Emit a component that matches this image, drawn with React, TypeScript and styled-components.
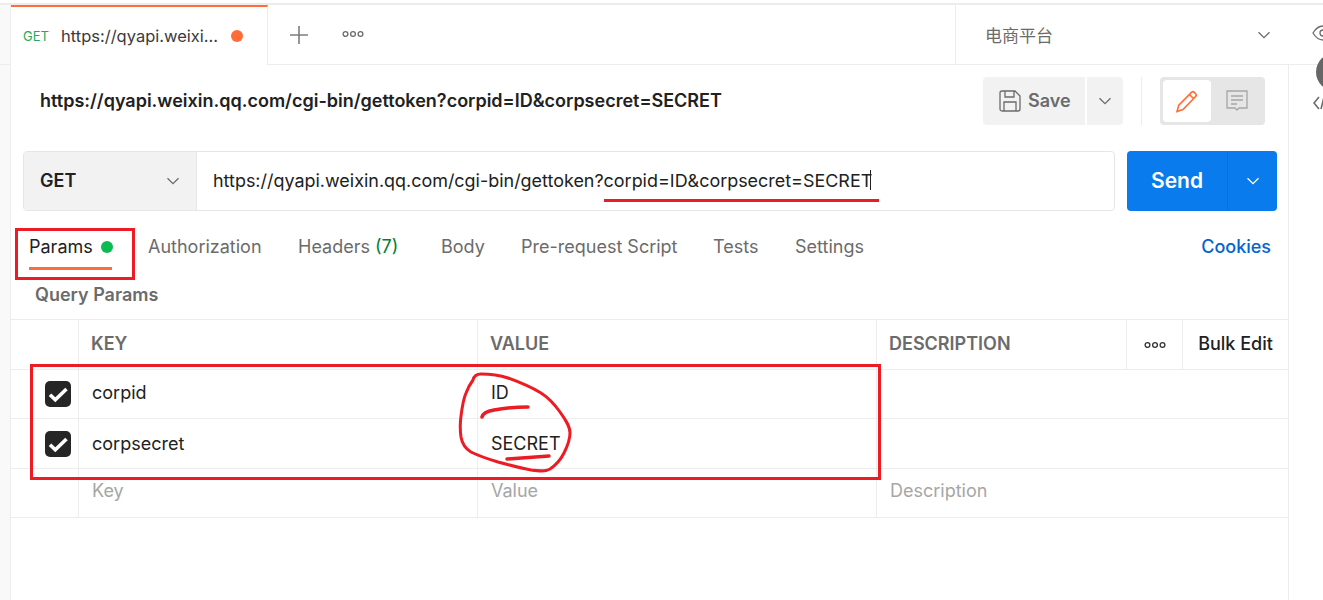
import React from "react";
import styled, { createGlobalStyle } from "styled-components";

const GlobalStyle = createGlobalStyle`
  html, body { margin: 0; padding: 0; background: #fff; }
  body { font-family: Inter, "Noto Sans CJK SC", sans-serif; color: #212121; overflow: hidden; }
  #root { width: 1323px; height: 600px; }
`;

const Chevron = ({ size = 16, color = "#6b6b6b" }: { size?: number; color?: string }) => (
  <svg width={size} height={size} viewBox="0 0 16 16" fill="none">
    <path d="M2.5 5.2 8 10.7l5.5-5.5" stroke={color} strokeWidth="1.3" />
  </svg>
);

const Dots = ({ color = "#6b6b6b" }: { color?: string }) => (
  <svg width="22" height="8" viewBox="0 0 22 8" fill="none" stroke={color} strokeWidth="1.3">
    <circle cx="3.5" cy="4" r="2.4" />
    <circle cx="11" cy="4" r="2.4" />
    <circle cx="18.5" cy="4" r="2.4" />
  </svg>
);

const Check = () => (
  <svg width="26" height="26" viewBox="0 0 26 26">
    <rect width="26" height="26" rx="5" fill="#262626" />
    <path d="M5 13.7l5.3 5L21.5 8" fill="none" stroke="#fff" strokeWidth="3.6" />
  </svg>
);

export default function App() {
  return (
    <Page>
      <GlobalStyle />
      <Gutter>
        <GutterHead />
      </Gutter>
      <Main>
        <TabBar>
          <ActiveTab>
            <TabMethod>GET</TabMethod>
            <TabTitle>https://qyapi.weixi...</TabTitle>
            <UnsavedDot />
          </ActiveTab>
          <TabAction>
            <svg width="20" height="20" viewBox="0 0 20 20" stroke="#7d7d7d" strokeWidth="1.6">
              <path d="M10 1v18M1 10h18" />
            </svg>
          </TabAction>
          <TabAction>
            <Dots />
          </TabAction>
          <EnvSelect>
            <EnvName>电商平台</EnvName>
            <Chevron />
          </EnvSelect>
        </TabBar>

        <Content>
          <TitleRow>
            <RequestName>https://qyapi.weixin.qq.com/cgi-bin/gettoken?corpid=ID&amp;corpsecret=SECRET</RequestName>
            <SaveButton>
              <svg width="22" height="22" viewBox="0 0 22 22" fill="none" stroke="#6b6b6b" strokeWidth="1.3">
                <path d="M1 3a2 2 0 0 1 2-2h13l5 5v13a2 2 0 0 1-2 2H3a2 2 0 0 1-2-2z" />
                <path d="M6 1v6h9V1M5 21v-9h12v9" />
              </svg>
              <SaveLabel>Save</SaveLabel>
            </SaveButton>
            <SaveCaret>
              <Chevron />
            </SaveCaret>
            <Divider />
            <ModeToggle>
              <ModeButton $active>
                <svg width="24" height="24" viewBox="0 0 24 24" fill="none" stroke="#ff6c37" strokeWidth="1.6">
                  <path d="M2 22.5l1.8-6.3L16.5 3.4a2 2 0 0 1 2.8 0l1.3 1.3a2 2 0 0 1 0 2.8L8 20.5zM14.5 5.5l4 4" />
                </svg>
              </ModeButton>
              <ModeButton>
                <svg width="22" height="22" viewBox="0 0 22 22" fill="none" stroke="#a6a6a6" strokeWidth="1.3">
                  <path d="M1 1h20v17h-8l-2 2-2-2H1z" />
                  <path d="M5 6h12M5 10h12M5 14h6" />
                </svg>
              </ModeButton>
            </ModeToggle>
          </TitleRow>

          <UrlRow>
            <UrlGroup>
              <MethodSelect>
                <MethodLabel>GET</MethodLabel>
                <Chevron />
              </MethodSelect>
              <UrlInput>
                https://qyapi.weixin.qq.com/cgi-bin/gettoken?corpid=ID&amp;corpsecret=SECRET
                <Caret />
              </UrlInput>
            </UrlGroup>
            <SendGroup>
              <SendLabel>Send</SendLabel>
              <SendCaret>
                <Chevron color="#fff" />
              </SendCaret>
            </SendGroup>
          </UrlRow>

          <RequestTabs>
            <RequestTab $active $width={119}>
              Params
              <GreenDot />
            </RequestTab>
            <RequestTab $width={150}>Authorization</RequestTab>
            <RequestTab $width={143}>
              Headers&nbsp;<Count>(7)</Count>
            </RequestTab>
            <RequestTab $width={80}>Body</RequestTab>
            <RequestTab $width={192}>Pre-request Script</RequestTab>
            <RequestTab $width={82}>Tests</RequestTab>
            <RequestTab>Settings</RequestTab>
            <Cookies>Cookies</Cookies>
          </RequestTabs>

          <SectionTitle>Query Params</SectionTitle>

          <Table>
            <HeaderRow>
              <Cell />
              <HeadCell $lift={2}>KEY</HeadCell>
              <HeadCell $lift={2}>VALUE</HeadCell>
              <HeadCell $lift={2}>DESCRIPTION</HeadCell>
              <ToolCell>
                <Dots color="#333" />
              </ToolCell>
              <ToolCell $lift={2}>Bulk Edit</ToolCell>
            </HeaderRow>
            <BodyRow>
              <CheckCell>
                <Check />
              </CheckCell>
              <Cell $lift={4}>corpid</Cell>
              <Cell $lift={4}>ID</Cell>
              <Cell $span />
            </BodyRow>
            <BodyRow>
              <CheckCell>
                <Check />
              </CheckCell>
              <Cell>corpsecret</Cell>
              <Cell>SECRET</Cell>
              <Cell $span />
            </BodyRow>
            <BodyRow>
              <Cell />
              <Cell $muted $lift={5}>
                Key
              </Cell>
              <Cell $muted $lift={5}>
                Value
              </Cell>
              <Cell $muted $span $lift={5}>
                Description
              </Cell>
            </BodyRow>
          </Table>
        </Content>
      </Main>

      <Rail>
        <RailEye>
          <svg width="22" height="18" viewBox="0 0 22 18" fill="none" stroke="#6b6b6b" strokeWidth="1.3">
            <path d="M1 9c3-5 6-7 10-7s7 2 10 7c-3 5-6 7-10 7S4 14 1 9z" />
            <circle cx="11" cy="9" r="3" />
          </svg>
        </RailEye>
        <Avatar />
        <RailCode>
          <svg width="20" height="14" viewBox="0 0 20 14" fill="none" stroke="#6b6b6b" strokeWidth="1.6">
            <path d="M6 1 1 7l5 6M11 1 8 13" />
          </svg>
        </RailCode>
      </Rail>

      <Annotations width="1323" height="600" viewBox="0 0 1323 600" fill="none" stroke="#ed1c24">
        <rect x="16.5" y="229.5" width="117" height="49" strokeWidth="3" />
        <rect x="31.5" y="365.5" width="848" height="113" strokeWidth="3" />
        <path d="M604 200.5h275" strokeWidth="3" />
        <path
          d="M473 380c1-4 4-6 8-6 9 0 18 1 27 4 11 4 23 9 33 15 8 5 14 12 19 19 5 7 10 14 10 21 0 8-3 14-6 20-3 6-8 12-14 16-5 3-12 2-19 1-11-2-22-5-33-8-10-3-19-6-27-10-5-3-9-9-10-15-1-7-1-14 0-21 1-8 2-16 5-23 2-5 4-9 7-13z"
          strokeWidth="3"
          strokeLinejoin="round"
        />
        <path d="M482 417c1-4 6-6 12-7 11-2 23-3 34-3" strokeWidth="3.5" strokeLinecap="round" />
        <path d="M507 459c14-1 28-2 42-3" strokeWidth="3.5" strokeLinecap="round" />
      </Annotations>
    </Page>
  );
}

const Page = styled.div`
  position: relative;
  display: flex;
  width: 1323px;
  height: 600px;
  overflow: hidden;
  background: #fff;
`;

const Gutter = styled.div`
  flex: 0 0 11px;
  box-sizing: border-box;
  margin-top: 5px;
  background: #f9f9f9;
  border-right: 1px solid #ededed;
  box-shadow: 0 -2px 0 #ececec;
`;

const GutterHead = styled.div`
  height: 59px;
  border-bottom: 1px solid #ededed;
`;

const Main = styled.div`
  flex: 0 0 1277px;
  min-width: 0;
  display: flex;
  flex-direction: column;
`;

const TabBar = styled.div`
  display: flex;
  align-items: stretch;
  flex: none;
  width: 1312px;
  height: 59px;
  margin-top: 5px;
  border-bottom: 1px solid #ededed;
  box-shadow: 0 -2px 0 #ececec;
`;

const ActiveTab = styled.div`
  display: flex;
  align-items: center;
  box-sizing: border-box;
  width: 257px;
  height: 60px;
  padding: 0 12px;
  background: #fff;
  border-top: 2px solid #ff6c37;
  border-right: 1px solid #ededed;
  position: relative;
  z-index: 1;
`;

const TabMethod = styled.span`
  font-size: 13px;
  color: #26a95c;
  width: 38px;
`;

const TabTitle = styled.span`
  font-size: 16.5px;
  color: #3a3a3a;
  flex: 1;
  white-space: nowrap;
`;

const UnsavedDot = styled.span`
  width: 12px;
  height: 12px;
  margin-right: 12px;
  border-radius: 50%;
  background: #ff6c37;
`;

const TabAction = styled.div`
  display: flex;
  align-items: center;
  justify-content: center;
  width: 53px;
  &:nth-child(2) { margin-left: 4px; }
  &:nth-child(3) { padding-left: 1px; padding-bottom: 1px; }
`;

const EnvSelect = styled.div`
  display: flex;
  align-items: center;
  justify-content: space-between;
  box-sizing: border-box;
  width: 368px;
  margin-left: auto;
  padding: 0 51px 0 29px;
  border-left: 1px solid #ededed;
`;

const EnvName = styled.span`
  font-size: 17px;
  color: #6b6b6b;
  margin-bottom: 1px;
`;

const Content = styled.div`
  display: flex;
  flex-direction: column;
  flex: 1;
`;

const TitleRow = styled.div`
  display: flex;
  align-items: center;
  height: 72px;
  padding: 0 23px 0 29px;
`;

const RequestName = styled.h1`
  flex: 1;
  margin: 0 0 2px;
  font-size: 18px;
  font-weight: 600;
  color: #212121;
  white-space: nowrap;
`;

const SaveButton = styled.button`
  display: flex;
  align-items: center;
  gap: 7px;
  box-sizing: border-box;
  width: 102px;
  height: 48px;
  padding: 0 0 0 16px;
  border: 0;
  border-radius: 4px 0 0 4px;
  background: #f2f2f2;
  color: #6b6b6b;
  font: 600 18px Inter, sans-serif;
`;

const SaveLabel = styled.span`
  margin-bottom: 2px;
`;

const SaveCaret = styled.div`
  display: flex;
  align-items: center;
  justify-content: center;
  width: 36px;
  height: 48px;
  margin-left: 2px;
  border-radius: 0 4px 4px 0;
  background: #f2f2f2;
`;

const Divider = styled.div`
  width: 1px;
  height: 48px;
  margin: 0 18px;
  background: #ededed;
`;

const ModeToggle = styled.div`
  display: flex;
  box-sizing: border-box;
  width: 105px;
  height: 48px;
  padding: 3px;
  border-radius: 4px;
  background: #e6e6e6;
`;

const ModeButton = styled.div<{ $active?: boolean }>`
  display: flex;
  align-items: center;
  justify-content: center;
  flex: 0 0 ${(p) => (p.$active ? "48px" : "51px")};
  border-radius: 4px;
  background: ${(p) => (p.$active ? "#fff" : "transparent")};
`;

const UrlRow = styled.div`
  display: flex;
  gap: 12px;
  height: 60px;
  margin: 14px 0 0 12px;
  width: 1254px;
`;

const UrlGroup = styled.div`
  display: flex;
  flex: 1;
  box-sizing: border-box;
  border: 1px solid #e6e6e6;
  border-radius: 4px;
  overflow: hidden;
`;

const MethodSelect = styled.div`
  display: flex;
  align-items: center;
  justify-content: space-between;
  box-sizing: border-box;
  flex: 0 0 173px;
  padding: 0 15px 0 16px;
  background: #f2f2f2;
  border-right: 1px solid #e6e6e6;
  font-size: 18px;
  font-weight: 600;
  color: #212121;
`;

const MethodLabel = styled.span`
  margin-bottom: 2px;
`;

const UrlInput = styled.div`
  display: flex;
  align-items: center;
  flex: 1;
  padding: 0 0 2px 16px;
  font-size: 17.95px;
  color: #212121;
  white-space: nowrap;
`;

const Caret = styled.span`
  width: 1px;
  height: 20px;
  margin-left: -2px;
  background: #212121;
`;

const SendGroup = styled.div`
  display: flex;
  flex: 0 0 150px;
  border-radius: 4px;
  background: #097bed;
  color: #fff;
`;

const SendLabel = styled.div`
  display: flex;
  align-items: center;
  justify-content: center;
  width: 101px;
  padding-bottom: 2px;
  box-sizing: border-box;
  font-size: 21px;
  font-weight: 600;
  border-right: 1px solid #0a6fd3;
`;

const SendCaret = styled.div`
  display: flex;
  align-items: center;
  justify-content: center;
  flex: 1;
`;

const RequestTabs = styled.div`
  display: flex;
  align-items: center;
  box-sizing: border-box;
  height: 36px;
  padding-bottom: 2px;
  margin: 18px 0 0 18px;
  width: 1242px;
`;

const RequestTab = styled.div<{ $active?: boolean; $width?: number }>`
  position: relative;
  display: flex;
  align-items: center;
  ${(p) => (p.$width ? `flex: 0 0 ${p.$width}px;` : "")}
  font-size: 18px;
  color: ${(p) => (p.$active ? "#212121" : "#6b6b6b")};
  white-space: nowrap;
  ${(p) =>
    p.$active
      ? `&::after {
          content: "";
          position: absolute;
          left: 0;
          top: 31px;
          width: 83px;
          height: 3px;
          background: #ff6c37;
        }`
      : ""}
`;

const GreenDot = styled.span`
  width: 12px;
  height: 12px;
  margin: 2px 0 0 8px;
  border-radius: 50%;
  background: #0cbb52;
`;

const Count = styled.span`
  color: #007f31;
`;

const Cookies = styled.a`
  margin-left: auto;
  font-size: 18px;
  font-weight: 500;
  color: #0265d2;
`;

const SectionTitle = styled.div`
  height: 20px;
  margin: 20px 0 0 24px;
  line-height: 20px;
  font-size: 18px;
  font-weight: 600;
  color: #6b6b6b;
`;

const Table = styled.div`
  width: 1277px;
  margin-top: 14px;
  border-top: 1px solid #ededed;
`;

const COLUMNS = "67px 399px 399px 250px 56px 106px";

const HeaderRow = styled.div`
  display: grid;
  box-sizing: border-box;
  grid-template-columns: ${COLUMNS};
  height: 50px;
  border-bottom: 1px solid #ededed;
`;

const BodyRow = styled.div`
  display: grid;
  box-sizing: border-box;
  grid-template-columns: ${COLUMNS};
  height: 49.4px;
  border-bottom: 1px solid #ededed;
`;

const Cell = styled.div<{ $muted?: boolean; $span?: boolean; $lift?: number }>`
  display: flex;
  align-items: center;
  padding-left: 13px;
  padding-bottom: ${(p) => p.$lift ?? 0}px;
  font-size: 18px;
  color: ${(p) => (p.$muted ? "#a6a6a6" : "#212121")};
  border-left: 1px solid #ededed;
  ${(p) => (p.$span ? "grid-column: span 3;" : "")}
  &:first-child { border-left: 0; padding-left: 0; }
`;

const HeadCell = styled(Cell)`
  padding-left: 12px;
  font-weight: 600;
  color: #6b6b6b;
`;

const ToolCell = styled(Cell)`
  justify-content: center;
  padding-left: 0;
  font-weight: 500;
  color: #212121;
`;

const CheckCell = styled(Cell)`
  && { padding-left: 34px; }
`;

const Rail = styled.div`
  flex: 1;
  display: flex;
  flex-direction: column;
  box-sizing: border-box;
  margin-top: 65px;
  border-left: 1px solid #ededed;
`;

const RailEye = styled.div`
  position: absolute;
  top: 24px;
  left: 1312px;
`;

const Avatar = styled.div`
  width: 38px;
  height: 38px;
  margin: -12px 0 0 27px;
  border-radius: 50%;
  background: #666;
  flex: none;
`;

const RailCode = styled.div`
  margin: 3px 0 0 24px;
`;

const Annotations = styled.svg`
  position: absolute;
  top: 0;
  left: 0;
  pointer-events: none;
`;
